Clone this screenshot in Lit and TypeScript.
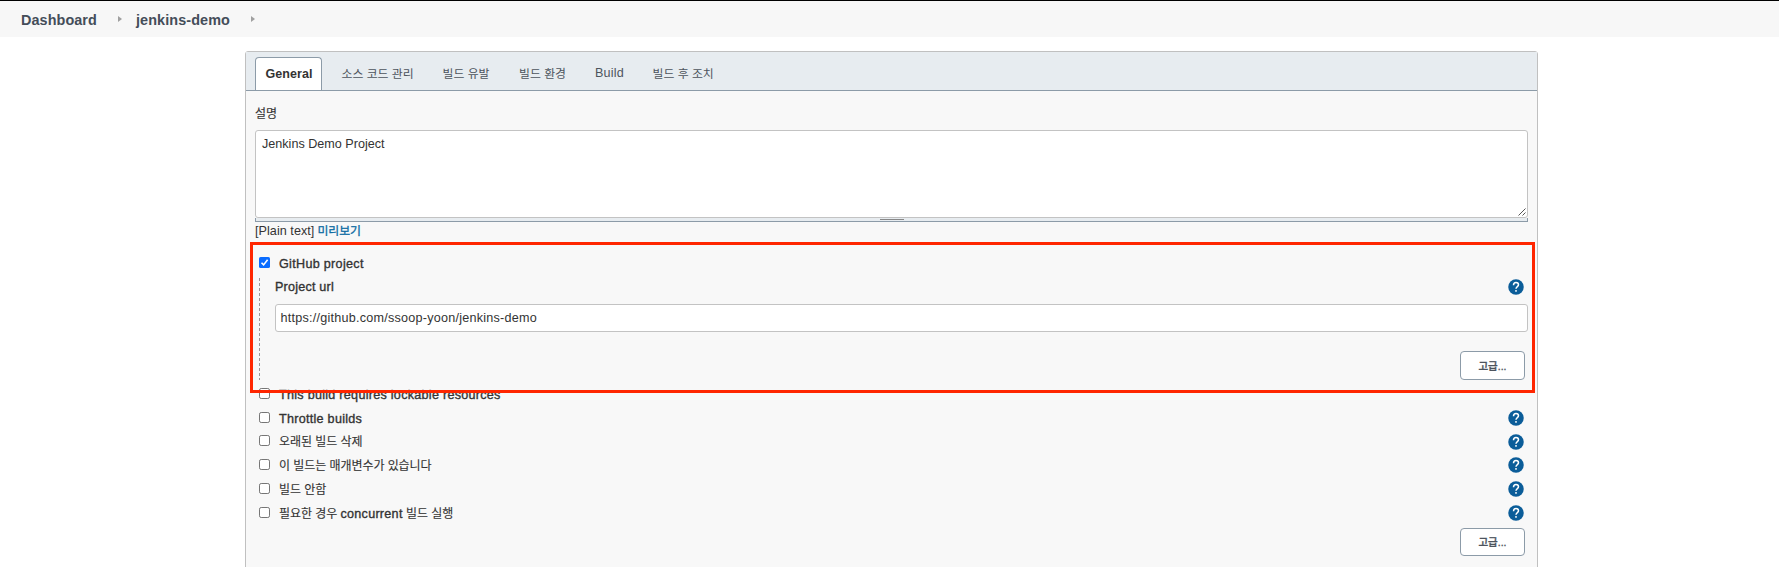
import { LitElement, html, css, svg } from "lit";
import { customElement, property } from "lit/decorators.js";

@customElement("help-icon")
class HelpIcon extends LitElement {
  static styles = css`
    :host { display: block; width: 16px; height: 16px; }
    svg { display: block; }
  `;
  render() {
    return html`<svg width="16" height="16" viewBox="0 0 16 16">
      ${svg`<circle cx="8" cy="8" r="7.75" fill="#0b5d99"/>
      <path d="M5.5 6.3 C5.5 4.4 6.5 3.5 8 3.5 C9.5 3.5 10.5 4.4 10.5 5.8 C10.5 7.5 8 7.7 8 9.8" fill="none" stroke="#fff" stroke-width="1.5"/>
      <rect x="7.2" y="11.1" width="1.6" height="1.6" fill="#fff"/>`}
    </svg>`;
  }
}

@customElement("check-box")
class CheckBox extends LitElement {
  @property({ type: Boolean }) checked = false;
  static styles = css`
    :host { display: block; width: 11px; height: 11px; }
    svg { display: block; }
  `;
  render() {
    return html`<svg width="11" height="11" viewBox="0 0 11 11">
      ${this.checked
        ? svg`<rect width="11" height="11" rx="1.6" fill="#0a6cff"/><path d="M2.5 5.7 L4.6 7.9 L8.6 2.8" fill="none" stroke="#fff" stroke-width="1.6"/>`
        : svg`<rect x=".5" y=".5" width="10" height="10" rx="1.7" fill="#fff" stroke="#767676"/>`}
    </svg>`;
  }
}

@customElement("app-root")
class AppRoot extends LitElement {
  static styles = css`
    :host {
      display: block; height: 567px; overflow: hidden; position: relative; background: #fff;
      font-family: "Liberation Sans", "Noto Sans CJK KR", sans-serif;
      font-size: 12.6px; line-height: 16px; color: #333; white-space: nowrap;
    }
    * { box-sizing: border-box; }
    .crumbs {
      height: 37px; border-top: 1px solid #000; background: #f7f7f7; padding: 1px 0 0 21px;
      display: flex; align-items: center; font-size: 14.4px; font-weight: 700; color: #444d59; letter-spacing: .08px;
    }
    .crumb { width: 97px; }
    .crumb.job { width: 114.5px; letter-spacing: .1px; }
    .arrow { width: 0; height: 0; border: 3.5px solid transparent; border-left: 4px solid #a0a0a0; border-right: 0; margin-top: -1px; }
    .arrow.first { margin-right: 14px; }
    .panel {
      width: 1293px; height: 540px; margin: 14px 0 0 245px; border: 1px solid #c0c0c0;
      border-radius: 3px 3px 0 0; background: #f8f8f8;
    }
    .tabs { height: 39px; background: #e7ecf0; border-bottom: 1px solid #8c9ba8; padding: 5px 0 0 9px; display: flex; color: #4d545d; }
    .tab { height: 32px; line-height: 34px; font-size: 11.9px; }
    .tab.latin { font-size: 12.6px; line-height: 33px; letter-spacing: .2px; }
    .tab.active {
      width: 67px; height: 33px; line-height: 32px; border: 1px solid #8c9ba8; border-bottom: 0; border-radius: 4px 4px 0 0;
      background: #fff; color: #333; font-weight: 700; font-size: 12.5px; letter-spacing: .05px; padding-left: 9.5px; margin-right: 19.5px;
    }
    .body { padding: 0 9px; display: flex; flex-direction: column; }
    .medium { -webkit-text-stroke: .35px #333; }
    .ko { font-size: 12px; letter-spacing: -.06px; -webkit-text-stroke: .12px #333; }
    .en { font-size: 12.6px; letter-spacing: .27px; -webkit-text-stroke: .35px #333; }
    .caption { height: 39px; padding-top: 15px; }
    .area { height: 88px; border: 1px solid #c3c3c3; border-radius: 3px; background: #fff; padding: 5px 6px; display: flex; justify-content: space-between; }
    .grip { align-self: flex-end; margin: 0 -5px -4px 0; }
    .handle { height: 4px; background: #e7ecf0; border: 1px solid #8c9ba8; border-top: 0; display: flex; justify-content: center; }
    .bar { width: 24px; height: 1px; background: #888; margin-top: 1px; }
    .preview { height: 30px; padding-top: 1px; display: flex; gap: 3px; letter-spacing: .05px; }
    .link { color: #0b6aa2; font-size: 11.9px; letter-spacing: -.05px; -webkit-text-stroke: .3px #0b6aa2; }
    .row { display: flex; align-items: center; padding: 0 4px; height: 24px; }
    .row help-icon { margin-left: auto; }
    .label { margin-left: 9px; }
    .option .label { padding-top: 1.5px; }
    .row check-box { margin-top: -2px; }
    .row check-box[checked] { margin-top: -4px; }
    .nested { height: 102px; margin: 2px 0 3px 4px; display: flex; }
    .dash { width: 1px; background: repeating-linear-gradient(#999 0 3px, transparent 3px 5px); }
    .fields { flex: 1; margin-left: 15px; display: flex; flex-direction: column; }
    .field-head { height: 26px; display: flex; justify-content: space-between; padding: 1px 4px 0 0; }
    .input { height: 28px; line-height: 27px; border: 1px solid #c3c3c3; border-radius: 3px; background: #fff; padding-left: 4.5px; letter-spacing: .24px; }
    .button {
      align-self: flex-end; width: 65px; height: 29px; line-height: 28px; text-align: center; margin: 19px 3px 0 0;
      background: #fff; border: 1px solid #8c9ba8; border-radius: 4px; font-size: 10.5px; font-weight: 500; color: #4d545d;
      -webkit-text-stroke: .3px #4d545d;
    }
    .button.last { margin-top: 3px; height: 28px; line-height: 27px; }
    .frame { position: absolute; left: 250px; top: 242px; width: 1285px; height: 151px; border: 3px solid #ff2600; }
  `;

  tabs = [
    { text: "소스 코드 관리", width: 101, latin: false },
    { text: "빌드 유발", width: 76.5, latin: false },
    { text: "빌드 환경", width: 76, latin: false },
    { text: "Build", width: 57.5, latin: true },
    { text: "빌드 후 조치", width: 80, latin: false },
  ];

  options = [
    { label: html`<span class="en">This build requires lockable resources</span>`, height: 23, help: false },
    { label: html`<span class="en">Throttle builds</span>`, height: 24, help: true },
    { label: html`<span class="ko">오래된 빌드 삭제</span>`, height: 23, help: true },
    { label: html`<span class="ko">이 빌드는 매개변수가 있습니다</span>`, height: 24, help: true },
    { label: html`<span class="ko">빌드 안함</span>`, height: 24, help: true },
    { label: html`<span class="ko">필요한 경우 <span class="en">concurrent</span> 빌드 실행</span>`, height: 24, help: true },
  ];

  render() {
    return html`
      <div class="crumbs">
        <span class="crumb">Dashboard</span><span class="arrow first"></span>
        <span class="crumb job">jenkins-demo</span><span class="arrow"></span>
      </div>
      <div class="panel">
        <div class="tabs">
          <div class="tab active">General</div>
          ${this.tabs.map((t) => html`<div class="tab ${t.latin ? "latin" : ""}" style="width:${t.width}px">${t.text}</div>`)}
        </div>
        <div class="body">
          <div class="caption"><span class="ko">설명</span></div>
          <div class="area">
            <span>Jenkins Demo Project</span>
            <svg class="grip" width="8" height="8" viewBox="0 0 8 8"><path d="M.5 7.5 L7.5 .5 M4.5 7.5 L7.5 4.5" stroke="#555" fill="none"/></svg>
          </div>
          <div class="handle"><div class="bar"></div></div>
          <div class="preview"><span>[Plain text]</span><span class="link">미리보기</span></div>
          <div class="row"><check-box checked></check-box><span class="label medium" style="letter-spacing:.3px">GitHub project</span></div>
          <div class="nested">
            <div class="dash"></div>
            <div class="fields">
              <div class="field-head"><span class="medium" style="letter-spacing:.2px">Project url</span><help-icon></help-icon></div>
              <div class="input">https://github.com/ssoop-yoon/jenkins-demo</div>
              <div class="button">고급...</div>
            </div>
          </div>
          ${this.options.map((o) => html`
            <div class="row option" style="height:${o.height}px">
              <check-box></check-box>
              <span class="label">${o.label}</span>
              ${o.help ? html`<help-icon></help-icon>` : ""}
            </div>`)}
          <div class="button last">고급...</div>
        </div>
      </div>
      <div class="frame"></div>`;
  }
}
